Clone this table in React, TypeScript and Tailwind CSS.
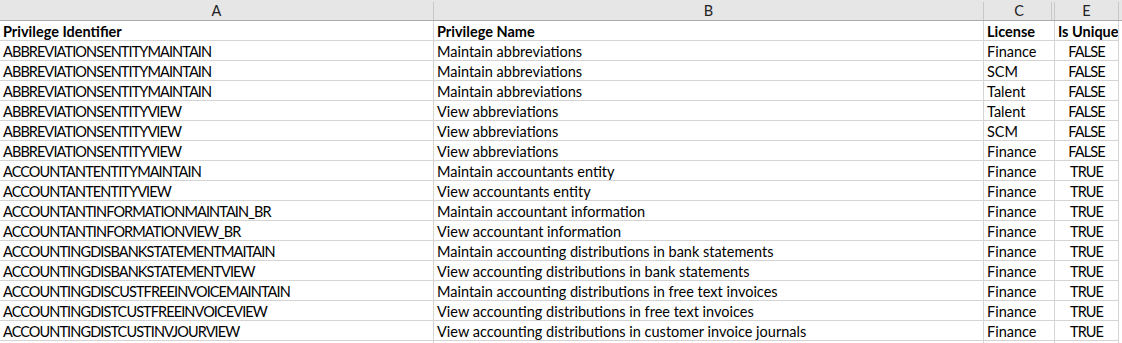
import React from "react";

const rows: [string, string, string, string][] = [
  ["ABBREVIATIONSENTITYMAINTAIN", "Maintain abbreviations", "Finance", "FALSE"],
  ["ABBREVIATIONSENTITYMAINTAIN", "Maintain abbreviations", "SCM", "FALSE"],
  ["ABBREVIATIONSENTITYMAINTAIN", "Maintain abbreviations", "Talent", "FALSE"],
  ["ABBREVIATIONSENTITYVIEW", "View abbreviations", "Talent", "FALSE"],
  ["ABBREVIATIONSENTITYVIEW", "View abbreviations", "SCM", "FALSE"],
  ["ABBREVIATIONSENTITYVIEW", "View abbreviations", "Finance", "FALSE"],
  ["ACCOUNTANTENTITYMAINTAIN", "Maintain accountants entity", "Finance", "TRUE"],
  ["ACCOUNTANTENTITYVIEW", "View accountants entity", "Finance", "TRUE"],
  ["ACCOUNTANTINFORMATIONMAINTAIN_BR", "Maintain accountant information", "Finance", "TRUE"],
  ["ACCOUNTANTINFORMATIONVIEW_BR", "View accountant information", "Finance", "TRUE"],
  ["ACCOUNTINGDISBANKSTATEMENTMAITAIN", "Maintain accounting distributions in bank statements", "Finance", "TRUE"],
  ["ACCOUNTINGDISBANKSTATEMENTVIEW", "View accounting distributions in bank statements", "Finance", "TRUE"],
  ["ACCOUNTINGDISCUSTFREEINVOICEMAINTAIN", "Maintain accounting distributions in free text invoices", "Finance", "TRUE"],
  ["ACCOUNTINGDISTCUSTFREEINVOICEVIEW", "View accounting distributions in free text invoices", "Finance", "TRUE"],
  ["ACCOUNTINGDISTCUSTINVJOURVIEW", "View accounting distributions in customer invoice journals", "Finance", "TRUE"],
];

const cols = "grid grid-cols-[434px_550px_71px_64px_3px]";

export default function App() {
  return (
    <div
      className="w-[1122px] h-[343px] overflow-hidden bg-white text-black"
      style={{ fontFamily: "Lato, 'Open Sans', sans-serif" }}
    >
      {/* column header */}
      <div className={`${cols} h-[21px] bg-[#e6e6e6] border-b border-[#ababab] text-[14.5px] text-[#222]`}>
        <div className="flex items-center justify-center border-r border-[#c8c8c8] mt-[2px] leading-none">A</div>
        <div className="flex items-center justify-center border-r border-[#c8c8c8] mt-[2px] leading-none">B</div>
        <div className="flex items-center justify-center border-r border-[#c8c8c8] mt-[2px] leading-none relative">
          C
          <div className="absolute right-[2px] top-0 bottom-0 w-px bg-[#c8c8c8]" />
        </div>
        <div className="flex items-center justify-center border-r border-[#c8c8c8] mt-[2px] leading-none">E</div>
        <div />
      </div>
      {/* header row */}
      <div className={`${cols} h-[20px] text-[14.5px] font-bold`}>
        <Cell>Privilege Identifier</Cell>
        <Cell>Privilege Name</Cell>
        <Cell>License</Cell>
        <Cell>Is Unique</Cell>
        <div />
      </div>
      {rows.map((r, i) => (
        <div key={i} className={`${cols} h-[20px] text-[14.5px]`}>
          <Cell caps>{r[0]}</Cell>
          <Cell>{r[1]}</Cell>
          <Cell>{r[2]}</Cell>
          <Cell center caps>{r[3]}</Cell>
          <div />
        </div>
      ))}
      <div className={`${cols} h-[20px]`}>
        <Cell>{""}</Cell>
        <Cell>{""}</Cell>
        <Cell>{""}</Cell>
        <Cell>{""}</Cell>
        <div />
      </div>
    </div>
  );
}

function Cell({
  children,
  center,
  caps,
}: {
  children: React.ReactNode;
  center?: boolean;
  caps?: boolean;
}) {
  return (
    <div
      className={`border-r border-b border-[#d4d4d4] px-[3px] flex items-end pb-0 leading-[17px] whitespace-nowrap overflow-hidden ${
        center ? "justify-center" : ""
      } ${caps ? "tracking-[-0.9px]" : ""}`}
    >
      <span>{children}</span>
    </div>
  );
}
